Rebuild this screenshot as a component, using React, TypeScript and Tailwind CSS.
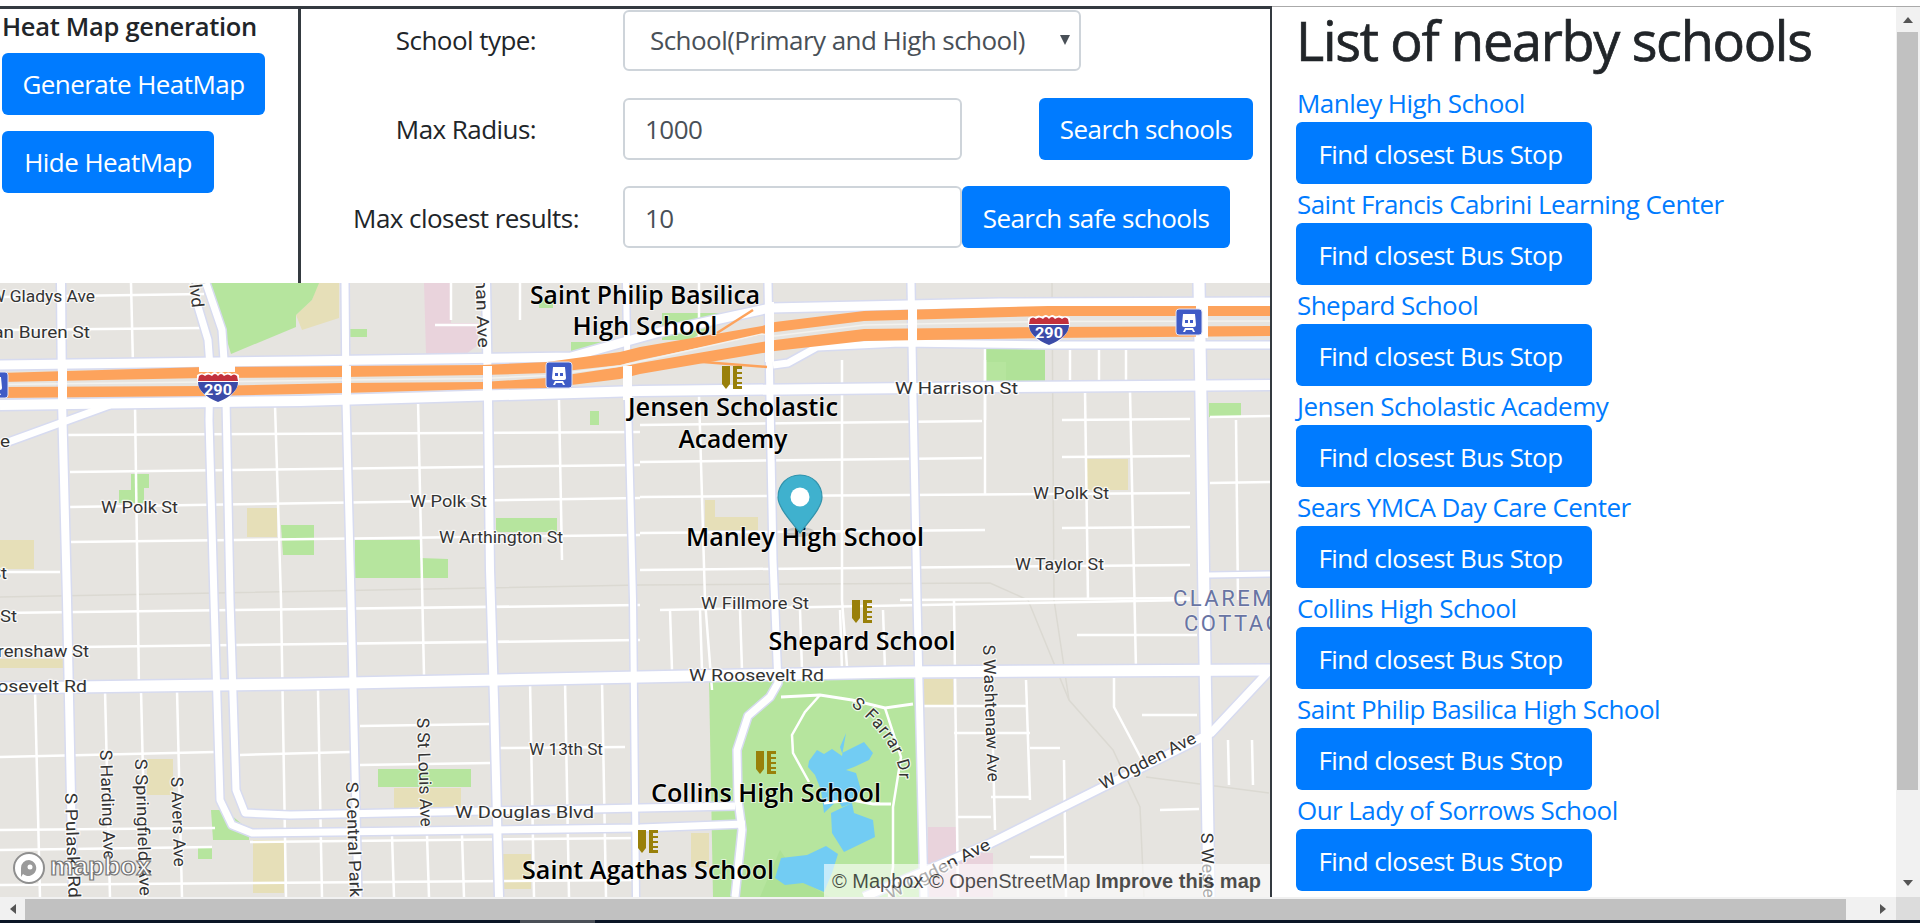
import React from "react";

const FONT = "font-['Open_Sans',sans-serif]";
const BTN = "inline-flex items-center justify-center h-[62px] rounded-[6px] bg-[#007bff] text-white text-[26px] tracking-[-0.55px] whitespace-nowrap";
const FIELD = "h-[62px] w-[339px] rounded-[6px] border-2 border-[#ced4da] bg-white pl-[20px] text-[26px] tracking-[-0.55px] text-[#495057] outline-none";

const schools = [
  "Manley High School",
  "Saint Francis Cabrini Learning Center",
  "Shepard School",
  "Jensen Scholastic Academy",
  "Sears YMCA Day Care Center",
  "Collins High School",
  "Saint Philip Basilica High School",
  "Our Lady of Sorrows School",
];

type P = string;
const major: [P, number][] = [
  ["61,283 62,400 67,600 73,897", 8],
  ["206,283 222,330 224,360 226,400 230,600 236,790 245,813 290,815 640,808 735,806", 7],
  ["196,300 208,340 210,367 209,420 214,600 220,800 232,825 252,833 640,828 745,824", 7],
  ["345,283 346,400 351,600 355,770 358,897", 7],
  ["486,283 488,400 490,570 494,700 499,897", 8],
  ["626,283 628,400 633,600 636,897", 6],
  ["768,283 770,400 773,560 777,660 778,683 770,697 748,716 737,750 738,800 742,830 735,897", 7],
  ["911,283 913,400 917,600 924,897", 7],
  ["1199,283 1201,400 1204,600 1209,897", 11],
  ["0,405 300,401 640,391 1000,387 1270,385", 10],
  ["0,365 300,361 571,357 620,343 660,332 770,308 1000,303 1270,302", 9],
  ["773,365 788,363 817,347 900,343 1050,345 1270,345", 7],
  ["0,688 300,684 640,677 900,672 1270,670", 11],
  ["1270,670 1211,733 1097,790 991,843 864,897", 8],
  ["0,445 110,405", 7],
  ["1209,575 1270,574", 5],
];

const minor: P[] = [
  "0,297 204,294", "0,330 204,328", "65,435 640,432", "70,472 640,465", "70,507 640,498", "70,542 640,535",
  "0,572 60,572", "0,613 640,605", "0,648 640,640", "0,757 215,752", "240,755 350,752", "360,726 490,724", "360,765 490,763",
  "500,748 625,747", "0,830 215,828", "640,425 982,421", "640,462 982,458", "640,497 1190,493", "640,533 985,530",
  "640,570 1190,565", "985,420 985,360", "1062,420 1190,419", "1062,457 1190,456", "1062,528 1190,527", "900,600 1190,598",
  "1210,417 1270,416", "1210,483 1270,482", "131,283 133,365", "135,405 139,690", "275,405 281,600 286,897", "418,400 424,675", "559,400 562,560",
  "451,283 451,320", "520,283 520,320", "435,325 478,325", "699,283 699,345", "699,395 705,600 712,690", "842,360 842,600 848,680", "985,345 985,495", "1085,390 1088,600",
  "1130,390 1136,670", "1236,420 1238,600", "1070,345 1070,380", "1099,345 1099,380", "1126,345 1126,380",
  "35,690 40,897", "105,690 110,897", "141,690 146,897", "177,690 182,897", "318,690 322,897", "392,835 394,897", "427,835 429,897", "462,835 464,897",
  "530,680 534,897", "565,680 569,897", "602,680 606,897", "954,600 958,897", "991,670 995,830", "1026,680 1030,800",
  "924,706 1026,706", "954,733 1030,733", "1030,748 1060,748", "1064,760 1066,897", "991,797 1030,797", "957,817 991,817", "1030,857 1064,857",
  "1077,635 1197,635", "1114,678 1114,707 1142,760", "1142,715 1197,715", "1160,810 1199,809", "1228,740 1229,785", "1252,740 1253,785",
  "660,610 1190,600", "670,610 672,670", "700,610 702,670", "740,610 742,670", "800,610 802,670", "840,610 842,670", "883,610 885,670",
  "0,850 212,847", "250,842 640,838", "0,885 640,880",
];

const sand: P[] = [
  "318,283 339,283 339,318 302,330 296,315 312,300",
  "0,540 34,540 34,569 0,569", "247,508 277,508 277,537 247,537", "1087,459 1128,459 1128,490 1087,490",
  "705,500 715,500 715,517 758,517 758,530 705,530", "0,659 64,659 64,668 0,668", "147,759 173,759 173,795 147,795",
  "253,840 284,840 284,893 253,893", "394,788 461,788 461,808 394,808", "502,854 531,854 531,889 502,889", "924,679 953,679 953,706 924,706", "691,833 709,833 709,867 691,867",
];
const park: P[] = [
  "210,283 319,283 312,300 296,315 296,327 231,354", "349,329 367,329 367,337 349,337", "539,300 553,300 553,308 539,308", "571,342 604,342 580,352 571,352",
  "590,411 599,411 599,425 590,425", "131,474 149,474 149,488 144,488 144,503 119,503 119,490 131,490", "281,525 314,525 314,555 283,555", "355,540 420,540 420,558 448,559 448,578 355,578",
  "496,518 557,518 557,532 496,532", "984,349 1045,349 1045,382 984,382", "1209,403 1241,403 1241,417 1209,417", "662,313 734,313 690,340 662,340", "378,769 471,769 471,787 378,787",
  "198,847 212,847 212,859 198,859", "211,810 225,810 249,830 249,840 213,840", "709,679 918,677 924,897 713,897",
];
const water: P[] = [
  "809,761 817,750 824,754 832,749 842,756 846,733 840,747 842,753 864,742 873,753 869,760 854,767 846,770 856,773 861,790 852,803 842,807 838,800 824,813 821,790 815,775 808,767",
  "831,813 852,803 854,813 873,820 875,837 844,852 832,833",
  "775,878 781,858 807,855 826,846 838,854 832,873 824,892 803,883 785,885",
];

const street = (t: string, x: number, y: number, w: number, opts: { r?: number; anchor?: string } = {}) => ({ t, x, y, w, ...opts });
const streets = [
  street("W Gladys Ave", 95, 302, 105, { anchor: "end" }),
  street("W Van Buren St", 90, 338, 130, { anchor: "end" }),
  street("e", 10, 447, 10, { anchor: "end" }),
  street("W Polk St", 101, 513, 77),
  street("W Polk St", 410, 507, 77),
  street("W Arthington St", 439, 543, 124),
  street("W Taylor St", 1015, 570, 89),
  street("W Harrison St", 895, 394, 123),
  street("W Polk St", 1033, 499, 76),
  street("W Fillmore St", 701, 609, 108),
  street("W Roosevelt Rd", 689, 681, 135),
  street("W 13th St", 529, 755, 74),
  street("W Douglas Blvd", 455, 818, 139),
  street("St", 7, 579, 17, { anchor: "end" }),
  street("St", 17, 622, 17, { anchor: "end" }),
  street("W Grenshaw St", 89, 657, 125, { anchor: "end" }),
  street("W Roosevelt Rd", 87, 692, 135, { anchor: "end" }),
];
const vertical = [
  street("S Independence Blvd", 192, 308, 170, { anchor: "end", r: 84 }),
  street("S Homan Ave", 478, 348, 118, { anchor: "end" }),
  street("S Pulaski Rd", 65, 793, 105),
  street("S Harding Ave", 100, 750, 110),
  street("S Springfield Ave", 135, 759, 137),
  street("S Avers Ave", 171, 777, 90),
  street("S Central Park Ave", 346, 782, 150),
  street("S St Louis Ave", 417, 718, 109),
  street("S Washtenaw Ave", 983, 645, 137),
  street("S Western Ave", 1201, 833, 115),
];
const schoolLabels: [string, number, number, number][] = [
  ["Saint Philip Basilica", 645, 304, 230],
  ["High School", 645, 335, 145],
  ["Jensen Scholastic", 733, 416, 210],
  ["Academy", 733, 448, 109],
  ["Manley High School", 805, 546, 238],
  ["Shepard School", 862, 650, 187],
  ["Collins High School", 766, 802, 230],
  ["Saint Agathas School", 648, 879, 252],
];

function SchoolIcon({ x, y }: { x: number; y: number }) {
  return (
    <g transform={`translate(${x - 10} ${y - 11})`} fill="#99800a">
      <path d="M0 0H8V18L4 23L0 18Z" />
      <path d="M11 0H20V3H15V6H20V8H15V11H20V13H15V16H20V18H15V20H20V23H11Z" />
    </g>
  );
}
function Metro({ x, y }: { x: number; y: number }) {
  return (
    <g transform={`translate(${x} ${y})`}>
      <rect x="-13" y="-13" width="26" height="26" rx="3" fill="#3f5bc6" stroke="#dfe3f5" />
      <path d="M-6 -8H6L7 3Q7 5 5 5H-5Q-7 5 -7 3Z" fill="#fff" />
      <rect x="-4" y="-2" width="3" height="3" fill="#3f5bc6" />
      <rect x="1" y="-2" width="3" height="3" fill="#3f5bc6" />
      <path d="M-6 10L-4 6H4L6 10H4L3 8H-3L-4 10Z" fill="#fff" />
    </g>
  );
}
function Shield({ x, y }: { x: number; y: number }) {
  return (
    <g transform={`translate(${x} ${y})`}>
      <path d="M-21 -12Q-17 -15 -14 -13Q-10 -16 -7 -13Q-3 -17 0 -13Q3 -17 7 -13Q10 -16 14 -13Q17 -15 21 -12Q23 6 0 17Q-23 6 -21 -12Z" fill="#fff" />
      <path d="M-19 -11Q-16 -14 -13 -11Q-10 -14 -6 -11Q-3 -15 0 -11Q3 -15 6 -11Q10 -14 13 -11Q16 -14 19 -11L20 -6H-20Z" fill="#c2303c" />
      <path d="M-20 -5H20Q20 7 0 15Q-20 7 -20 -5Z" fill="#3b4ba8" />
      <text x="0" y="8" textAnchor="middle" fontFamily="Roboto, sans-serif" fontWeight="700" fontSize="15" fill="#fff" textLength="28" lengthAdjust="spacingAndGlyphs">290</text>
    </g>
  );
}

function MapDrawing() {
  return (
    <svg viewBox="0 283 1270 614" className="block h-[614px] w-[1270px]">
      <defs>
        <path id="farrar" d="M851 706 C870 718 893 745 899 770 C900 780 898 786 896 796" />
      </defs>
      <rect x="0" y="283" width="1270" height="614" fill="#e6e4e0" />
      {sand.map((p, i) => <polygon key={i} points={p} fill="#e6dfb8" />)}
      <polygon points="424,283 451,283 451,323 478,323 478,345 466,354 426,354" fill="#e9d3dc" />
      <polygon points="928,827 958,827 958,853 993,853 993,897 928,897" fill="#e9d3dc" />
      {park.map((p, i) => <polygon key={i} points={p} fill="#b6e59e" />)}
      <polygon points="985,349 1045,349 1045,382 1006,382 1006,362 985,362" fill="#acdf94" opacity="0.6" />
      <polygon points="760,897 780,850 800,880 830,897" fill="#a8dd90" opacity="0.6" />
      {water.map((p, i) => <polygon key={i} points={p} fill="#72ccf3" />)}
      <g fill="none" stroke="#dbd9d2" strokeWidth="1.5">
        <polyline points="0,597 640,585 990,583 1028,600 1069,700 1113,750 1140,807 1144,897" />
        <polyline points="1052,283 1054,600 1069,700" />
        <polyline points="1146,777 1269,793" />
      </g>
      <g fill="none" stroke="#fff" strokeLinecap="butt" strokeWidth="2.5">
        {minor.map((p, i) => <polyline key={i} points={p} />)}
        <polyline points="781,697 820,695 852,700 885,708 913,704" strokeWidth="3" />
        <polyline points="820,695 805,712 792,735 793,753 809,782" />
        <polyline points="824,803 852,800 873,804 891,804" strokeWidth="3" />
        <polyline points="885,708 901,757 893,807 893,867 889,897" />
      </g>
      <g fill="none" stroke="#d7dbf0" strokeLinejoin="round">
        {major.map(([p, w], i) => <polyline key={i} points={p} strokeWidth={w + 3} />)}
      </g>
      <g fill="none" stroke="#fff" strokeLinejoin="round">
        {major.map(([p, w], i) => <polyline key={i} points={p} strokeWidth={w} />)}
      </g>
      <polygon points="0,373 204,367 343,366 482,365 547,362 620,352 640,347 762,326 775,322 864,311 1048,306 1270,306 1270,316 1048,316 864,321 775,332 640,360 620,365 547,373 482,375 343,377 204,378 0,382" fill="#fda35c" />
      <polygon points="0,387 204,386 343,383 482,382 547,378 620,367 640,363 762,342 775,340 864,329 1048,327 1270,326 1270,336 1048,338 864,341 775,351 640,374 620,379 547,388 482,389 343,393 204,396 0,398" fill="#fda35c" />
      <polyline points="690,361 767,367" fill="none" stroke="#fda35c" strokeWidth="2.5" />
      <polyline points="717,333 753,310" fill="none" stroke="#fda35c" strokeWidth="2.5" />
      <polyline points="0,384.5 204,382 343,380 482,378.5 547,375.5 620,366 640,361.5 762,334 775,336 864,325 1048,321.5 1270,321" fill="none" stroke="#f3f2ee" strokeWidth="1.5" />
      {[61, 345, 486, 626, 768, 911, 1199].map((x, i) => (
        <rect key={i} x={x - 3} y={i === 5 ? 305 : i === 4 || i === 6 ? 302 : 366} width={i === 6 ? 12 : 9} height={i === 4 ? 60 : i === 5 || i === 6 ? 36 : 34} fill="#fff" />
      ))}
      <rect x="199" y="366" width="36" height="6" fill="#fff" />
      <Shield x={218} y={387} />
      <Shield x={1049} y={330} />
      <Metro x={559} y={375} />
      <Metro x={1189} y={322} />
      <Metro x={-5} y={385} />
      <SchoolIcon x={732} y={377} />
      <SchoolIcon x={862} y={611} />
      <SchoolIcon x={766} y={762} />
      <SchoolIcon x={648} y={841} />
      <g fontFamily="Roboto, sans-serif" fontSize="17" fill="#333" stroke="#fff" strokeWidth="2.5" strokeOpacity="0.75" paintOrder="stroke" strokeLinejoin="round">
        {streets.map((s, i) => (
          <text key={i} x={s.x} y={s.y} textAnchor={s.anchor === "end" ? "end" : "start"} textLength={s.w} lengthAdjust="spacingAndGlyphs">{s.t}</text>
        ))}
        {vertical.map((s, i) => (
          <text key={i} transform={`translate(${s.x} ${s.y}) rotate(${s.r ?? 88})`} textAnchor={s.anchor === "end" ? "end" : "start"} textLength={s.w} lengthAdjust="spacingAndGlyphs">{s.t}</text>
        ))}
        <text transform="translate(1103 790) rotate(-27)" textLength="106" lengthAdjust="spacingAndGlyphs">W Ogden Ave</text>
        <text transform="translate(890 900) rotate(-27)" textLength="114" lengthAdjust="spacingAndGlyphs">W Ogden Ave</text>
        <text letterSpacing="1"><textPath href="#farrar">S Farrar Dr</textPath></text>
      </g>
      <g fontFamily="Roboto, sans-serif" fontSize="22" fill="#6874a3" stroke="#fff" strokeWidth="1.5" strokeOpacity="0.5" paintOrder="stroke">
        <text x="1173" y="606" letterSpacing="2.5">CLAREMONT</text>
        <text x="1184" y="631" letterSpacing="2.5">COTTAGE</text>
      </g>
      <g fontFamily="'Open Sans', sans-serif" fontWeight="600" fontSize="26" fill="#000" stroke="#fff" strokeWidth="2" strokeOpacity="0.6" paintOrder="stroke" textAnchor="middle">
        {schoolLabels.map(([t, x, y, w]) => (
          <text key={t} x={x} y={y} textLength={w} lengthAdjust="spacingAndGlyphs">{t}</text>
        ))}
      </g>
      <ellipse cx="800" cy="532" rx="14" ry="5" fill="#000" opacity="0.14" />
      <path d="M800 475 C787 475 778 485 778 497 C778 508 792 522 800 533 C808 522 822 508 822 497 C822 485 813 475 800 475Z" fill="#3fb1ce" stroke="#3293ac" strokeWidth="1.2" />
      <circle cx="800" cy="497" r="9.5" fill="#fff" />
      <g>
        <circle cx="29" cy="868" r="15" fill="#fff" stroke="#8f8f8f" strokeWidth="2" />
        <path d="M29 860 A8 8 0 1 1 23 874 L21 877 L21 868 A8 8 0 0 1 29 860Z" fill="#9a9a9a" />
        <circle cx="30" cy="867" r="2.5" fill="#fff" />
        <text x="50" y="875" fontFamily="'Liberation Sans', sans-serif" fontWeight="700" fontSize="25" fill="#fff" stroke="#777" strokeWidth="1.2" textLength="101" lengthAdjust="spacingAndGlyphs">mapbox</text>
      </g>
    </svg>
  );
}

function Arrow({ d }: { d: string }) {
  return (
    <svg width="12" height="12" viewBox="0 0 12 12" className="block">
      <path d={d} fill="#555" />
    </svg>
  );
}

export default function App() {
  return (
    <div className={`flex h-[923px] w-[1920px] flex-col overflow-hidden bg-white ${FONT}`}>
      <div className="h-[6px] shrink-0 bg-white" />
      <div className="flex h-[891px] shrink-0">
        <div className="flex w-[1272px] shrink-0 flex-col border-r-2 border-t-[3px] border-[#343a40]">
          <div className="flex h-[274px] shrink-0">
            <div className="flex w-[301px] shrink-0 flex-col items-start border-r-[3px] border-[#343a40] pl-[2px]">
              <div className="flex h-[44px] items-center pb-[10px] text-[25.5px] font-semibold tracking-[-0.3px] text-[#212529]">Heat Map generation</div>
              <button className={`${BTN} w-[263px]`}>Generate HeatMap</button>
              <button className={`${BTN} mt-[16px] w-[212px]`}>Hide HeatMap</button>
            </div>
            <div className="flex flex-1 flex-col pt-[1px] text-[26px] tracking-[-0.55px] text-[#212529]">
              <div className="flex h-[61px] items-center">
                <div className="w-[322px] pl-[8px] text-center">School type:</div>
                <div className="relative w-[458px]">
                  <select className="h-[61px] w-full appearance-none rounded-[6px] border-2 border-[#ced4da] bg-white pl-[25px] text-[#495057] outline-none">
                    <option>School(Primary and High school)</option>
                  </select>
                  <svg viewBox="0 0 10 10" className="absolute right-[11px] top-[25px] h-[10px] w-[10px]"><path d="M0 0H10L5 10Z" fill="#495057" /></svg>
                </div>
              </div>
              <div className="mt-[27px] flex h-[62px] items-center">
                <div className="w-[322px] pl-[8px] text-center">Max Radius:</div>
                <input readOnly value="1000" className={FIELD} />
                <button className={`${BTN} ml-[77px] w-[214px]`}>Search schools</button>
              </div>
              <div className="mt-[26px] flex h-[62px] items-center">
                <div className="w-[322px] pl-[8px] pt-[2px] text-center">Max closest results:</div>
                <input readOnly value="10" className={`${FIELD} pt-[2px]`} />
                <button className={`${BTN} w-[268px] pt-[2px]`}>Search safe schools</button>
              </div>
            </div>
          </div>
          <div className="relative h-[614px] shrink-0 overflow-hidden">
            <MapDrawing />
            <div className="absolute bottom-0 right-0 flex h-[33px] w-[446px] items-center justify-between bg-white/60 pl-[8px] pr-[9px] font-['Liberation_Sans',sans-serif] text-[20px] text-black/70">
              <span>© Mapbox © OpenStreetMap</span>
              <span className="font-bold">Improve this map</span>
            </div>
          </div>
        </div>
        <div className="flex-1 overflow-hidden border-t border-[#aaaaaa] pl-[24px]">
          <h1 className="flex h-[76px] items-center pb-[10px] text-[54px] font-normal leading-none tracking-[-1.3px] text-[#212529] [-webkit-text-stroke:0.7px_#212529]">List of nearby schools</h1>
          {schools.map((s) => (
            <div key={s} className="flex h-[101px] flex-col items-start">
              <a href="#" className="flex h-[39px] items-center pl-[1px] pt-[2px] text-[26px] tracking-[-0.55px] text-[#007bff]">{s}</a>
              <button className={`${BTN} w-[296px] pr-[7px] pt-[2px]`}>Find closest Bus Stop</button>
            </div>
          ))}
        </div>
        <div className="flex w-[24px] shrink-0 flex-col border-t border-[#aaaaaa] bg-[#f1f1f1]">
          <div className="flex h-[25px] items-center justify-center"><Arrow d="M1 9L6 3L11 9Z" /></div>
          <div className="ml-[1px] h-[758px] w-[21px] bg-[#c1c1c1]" />
          <div className="flex flex-1 items-end justify-center pb-[8px]"><Arrow d="M1 3L6 9L11 3Z" /></div>
        </div>
      </div>
      <div className="flex h-[23px] shrink-0 bg-[#f1f1f1]">
        <div className="flex w-[25px] items-center justify-center"><Arrow d="M9 1L3 6L9 11Z" /></div>
        <div className="mt-[2px] w-[1821px] bg-[#c1c1c1]" />
        <div className="flex w-[50px] items-center justify-end pr-[7px]"><Arrow d="M3 1L9 6L3 11Z" /></div>
        <div className="w-[24px] bg-[#dcdcdc]" />
      </div>
      <div className="flex h-[3px] shrink-0 bg-[#0b1526]">
        <div className="ml-[520px] w-[75px] bg-[#4a4f57]" />
      </div>
    </div>
  );
}
